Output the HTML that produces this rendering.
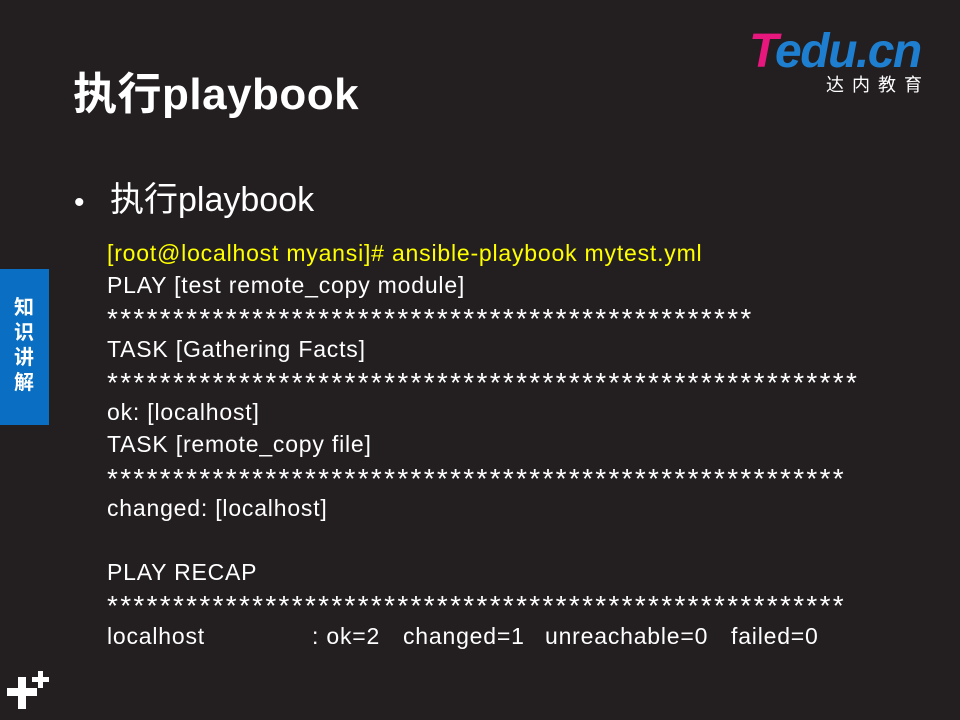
<!DOCTYPE html>
<html><head><meta charset="utf-8"><style>
body{margin:0;width:960px;height:720px;background:#231f20;position:relative;overflow:hidden;font-family:"Liberation Sans","Noto Sans CJK SC",sans-serif;color:#fff}
.a{position:absolute;white-space:nowrap}
.l{position:absolute;left:107px;font-size:23px;line-height:32px;white-space:nowrap;letter-spacing:0.8px}
.s{letter-spacing:2.3px;font-size:28px}
</style></head><body>
<div class="a" style="left:73px;top:68px;font-size:44px;font-weight:bold;line-height:54px;letter-spacing:0.5px">执行playbook</div>
<div class="a" style="left:749px;top:26px;font-size:48px;font-weight:bold;font-style:italic;line-height:52px;letter-spacing:-1.5px"><span style="color:#e8177e">T</span><span style="color:#1e7fd0">edu.cn</span></div>
<div class="a" style="left:826px;top:74px;font-size:18px;letter-spacing:8px;line-height:22px">达内教育</div>
<div class="a" style="left:0;top:269px;width:49px;height:156px;background:#0a6fc2"></div>
<div class="a" style="left:14px;top:296px;width:22px;font-size:20px;font-weight:bold;line-height:25px;white-space:normal">知识讲解</div>
<div class="a" style="left:74px;top:184px;font-size:30px;line-height:38px">•</div>
<div class="a" style="left:110px;top:179px;font-size:34px;line-height:42px">执行playbook</div>
<div class="l" style="top:237px;color:#ffff00">[root@localhost myansi]# ansible-playbook mytest.yml</div>
<div class="l" style="top:269px">PLAY [test remote_copy module]</div>
<div class="l s" style="top:303px">*************************************************</div>
<div class="l" style="top:333px">TASK [Gathering Facts]</div>
<div class="l s" style="top:367px">*********************************************************</div>
<div class="l" style="top:396px">ok: [localhost]</div>
<div class="l" style="top:428px">TASK [remote_copy file]</div>
<div class="l s" style="top:463px">********************************************************</div>
<div class="l" style="top:492px">changed: [localhost]</div>
<div class="l" style="top:556px">PLAY RECAP</div>
<div class="l s" style="top:590px">********************************************************</div>
<div class="l" style="top:620px">localhost</div>
<div class="l" style="top:620px;left:312px">: ok=2</div>
<div class="l" style="top:620px;left:403px">changed=1</div>
<div class="l" style="top:620px;left:545px">unreachable=0</div>
<div class="l" style="top:620px;left:731px">failed=0</div>
<div class="a" style="left:7px;top:688px;width:30px;height:8px;background:#fff"></div>
<div class="a" style="left:18px;top:677px;width:8px;height:32px;background:#fff"></div>
<div class="a" style="left:32px;top:677px;width:17px;height:5px;background:#fff"></div>
<div class="a" style="left:38px;top:671px;width:5px;height:17px;background:#fff"></div>
</body></html>
